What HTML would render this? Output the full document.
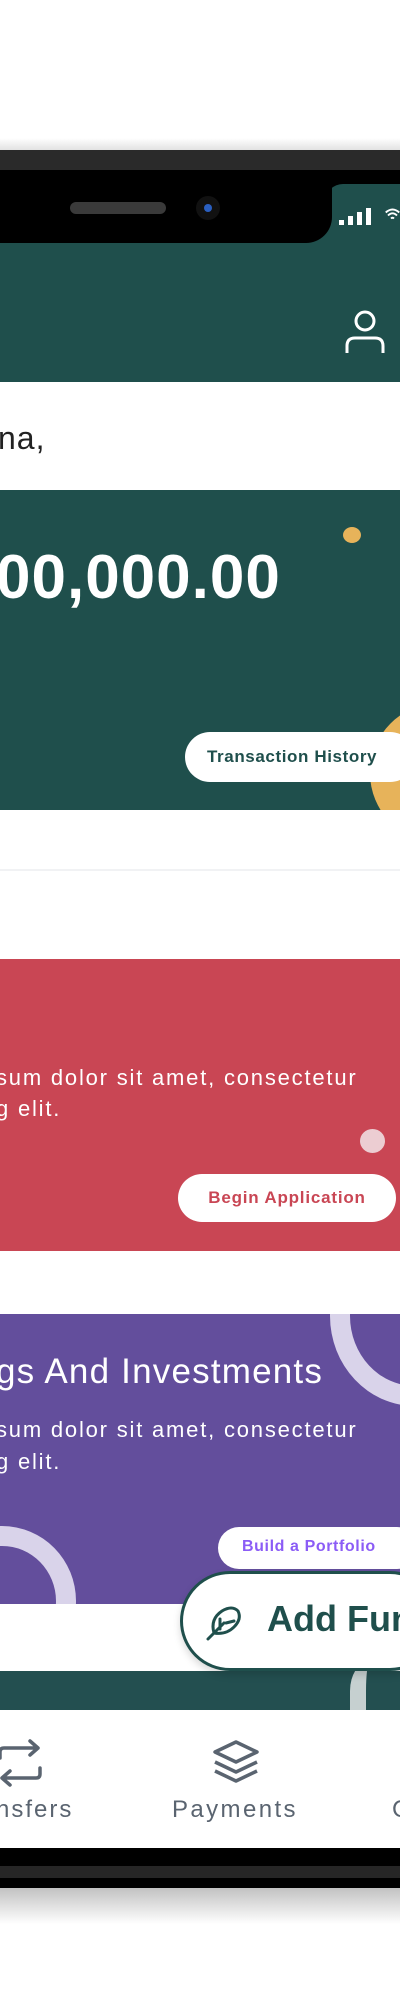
<!DOCTYPE html>
<html><head><meta charset="utf-8"><style>
*{margin:0;padding:0;box-sizing:border-box}
html,body{width:400px;height:2000px;overflow:hidden}
body{background:#fff;position:relative;font-family:"Liberation Sans",sans-serif}
#w{position:absolute;left:0;top:0;width:400px;height:2000px;overflow:hidden}
.a{position:absolute}
.pill{position:absolute;background:#fff;border-radius:30px;font-weight:bold;white-space:nowrap;overflow:hidden}
</style></head><body><div id="w">
<div class="a" style="left:0;top:138px;width:400px;height:14px;background:linear-gradient(#fff,#ddd)"></div>
<div class="a" style="left:0;top:1884px;width:400px;height:40px;background:linear-gradient(#bbb,#fff)"></div>
<!-- bezel -->
<div class="a" style="left:0;top:150px;width:400px;height:1738px;background:#000"></div>
<div class="a" style="left:0;top:150px;width:400px;height:20px;background:#2a2a2a"></div>
<div class="a" style="left:0;top:1866px;width:400px;height:12px;background:#262626"></div>
<!-- screen white -->
<div class="a" style="left:0;top:243px;width:400px;height:1605px;background:#fff"></div>
<!-- header green -->
<div class="a" style="left:0;top:200px;width:400px;height:182px;background:#1f4f4c"></div>
<div class="a" style="left:325px;top:184px;width:75px;height:40px;background:#1f4f4c;border-top-left-radius:18px"></div>
<div class="a" style="left:0;top:170px;width:332px;height:73px;background:#000;border-bottom-right-radius:26px"></div>
<div class="a" style="left:70px;top:202px;width:96px;height:12px;border-radius:6px;background:#3a3a3a"></div>
<div class="a" style="left:196px;top:196px;width:24px;height:24px;border-radius:50%;background:#111"></div>
<div class="a" style="left:204px;top:204px;width:8px;height:8px;border-radius:50%;background:#2a5fc0"></div>
<!-- signal -->
<div class="a" style="left:339px;top:220px;width:5px;height:5px;background:#fff"></div>
<div class="a" style="left:348px;top:216px;width:5px;height:9px;background:#fff"></div>
<div class="a" style="left:357px;top:212px;width:5px;height:13px;background:#fff"></div>
<div class="a" style="left:366px;top:208px;width:5px;height:17px;background:#fff"></div>
<svg class="a" style="left:385px;top:204px" width="15" height="20" viewBox="0 0 20 20"><path d="M1 8 Q10 0 19 8 M4 12 Q10 6 16 12 M8 16 Q10 14 12 16" stroke="#fff" stroke-width="2.5" fill="none"/></svg>
<svg class="a" style="left:343px;top:308px" width="44" height="48" viewBox="0 0 44 48"><circle cx="22" cy="13" r="9" stroke="#fff" stroke-width="3" fill="none"/><path d="M4 45 V38 Q4 30 12 30 H32 Q40 30 40 38 V45" stroke="#fff" stroke-width="3" fill="none"/></svg>
<div class="a" style="left:-2px;top:420px;font-size:32px;color:#222;letter-spacing:1px">na,</div>
<!-- balance card -->
<div class="a" style="left:0;top:490px;width:400px;height:320px;background:#1f4f4c;overflow:hidden">
  <div class="a" style="left:343px;top:37px;width:18px;height:16px;border-radius:50%;background:#e7b35a"></div>
  <div class="a" style="left:370px;top:213px;width:140px;height:140px;border-radius:50%;background:#e7b35a"></div>
  <div class="a" style="left:-4px;top:52px;font-size:62px;font-weight:bold;color:#fff;letter-spacing:1px">00,000.00</div>
  <div class="pill" style="left:185px;top:242px;width:230px;height:50px;line-height:50px;padding-left:22px;font-size:17px;letter-spacing:0.6px;color:#1f4f4c">Transaction History</div>
</div>
<div class="a" style="left:0;top:869px;width:400px;height:2px;background:#f1f2f4"></div>
<!-- red card -->
<div class="a" style="left:0;top:959px;width:400px;height:292px;background:#c94654;overflow:hidden">
  <div class="a" style="left:-4px;top:103px;font-size:22px;line-height:31px;color:#fff;white-space:nowrap;letter-spacing:1.8px">sum dolor sit amet, consectetur<br>g elit.</div>
  <div class="a" style="left:360px;top:170px;width:25px;height:24px;border-radius:50%;background:#eccdd2"></div>
  <div class="pill" style="left:178px;top:215px;width:218px;height:48px;line-height:48px;text-align:center;font-size:17px;letter-spacing:0.8px;color:#c94654">Begin Application</div>
</div>
<!-- purple card -->
<div class="a" style="left:0;top:1314px;width:400px;height:290px;background:#634e9c;overflow:hidden">
  <div class="a" style="left:330px;top:-88px;width:170px;height:180px;border-radius:50%;border:20px solid #d9d3ea"></div>
  <div class="a" style="left:-72px;top:212px;width:148px;height:150px;border-radius:50%;border:20px solid #d9d3ea"></div>
  <div class="a" style="left:-4px;top:38px;font-size:35px;color:#fff;white-space:nowrap;letter-spacing:1.2px">gs And Investments</div>
  <div class="a" style="left:-4px;top:100px;font-size:22px;line-height:32px;color:#fff;white-space:nowrap;letter-spacing:1.8px">sum dolor sit amet, consectetur<br>g elit.</div>
  <div class="pill" style="left:218px;top:213px;width:200px;height:42px;line-height:40px;padding-left:24px;font-size:16px;letter-spacing:0.6px;color:#8b5cf6">Build a Portfolio</div>
</div>
<!-- teal band -->
<div class="a" style="left:0;top:1671px;width:400px;height:39px;background:#234f50;overflow:hidden">
  <div class="a" style="left:350px;top:-10px;width:40px;height:60px;border-left:16px solid #c6d0d0;border-radius:50% 0 0 0"></div>
</div>
<!-- Add Funds pill -->
<div class="a" style="left:180px;top:1571px;width:260px;height:100px;border-radius:50px;border:3px solid #1f4f4c;background:#fff;box-shadow:0 4px 8px rgba(0,0,0,.15)"></div>
<svg class="a" style="left:204px;top:1603px" width="40" height="40" viewBox="0 0 40 40"><path d="M4 36 L20 20 M10 30 Q6 16 18 8 Q28 2 34 8 Q38 16 30 24 Q22 32 10 30 Z M16 26 L16 16 M22 20 L30 18" stroke="#1f4f4c" stroke-width="3" fill="none" stroke-linecap="round"/></svg>
<div class="a" style="left:267px;top:1598px;font-size:36px;font-weight:bold;color:#1f4f4c;white-space:nowrap">Add Funds</div>
<!-- nav -->
<div class="a" style="left:0;top:1710px;width:400px;height:138px;background:#fff">
  <svg class="a" style="left:-4px;top:28px" width="50" height="50" viewBox="0 0 50 50"><path d="M4 20 V14 Q4 10 8 10 H42 M34 3 L42 10 L34 17 M44 30 V36 Q44 40 40 40 H6 M14 33 L6 40 L14 47" stroke="#5a6470" stroke-width="3.5" fill="none" stroke-linecap="round" stroke-linejoin="round"/></svg>
  <svg class="a" style="left:211px;top:28px" width="50" height="50" viewBox="0 0 50 50"><path d="M25 4 L46 14 L25 24 L4 14 Z M4 24 L25 34 L46 24 M4 33 L25 43 L46 33" stroke="#5a6470" stroke-width="3.5" fill="none" stroke-linejoin="round"/></svg>
  <div class="a" style="left:-4px;top:86px;font-size:24px;color:#5a6470;letter-spacing:2px">nsfers</div>
  <div class="a" style="left:172px;top:86px;font-size:24px;color:#5a6470;letter-spacing:2.4px">Payments</div>
  <div class="a" style="left:392px;top:86px;font-size:24px;color:#5a6470">C</div>
</div>
</div></body></html>
